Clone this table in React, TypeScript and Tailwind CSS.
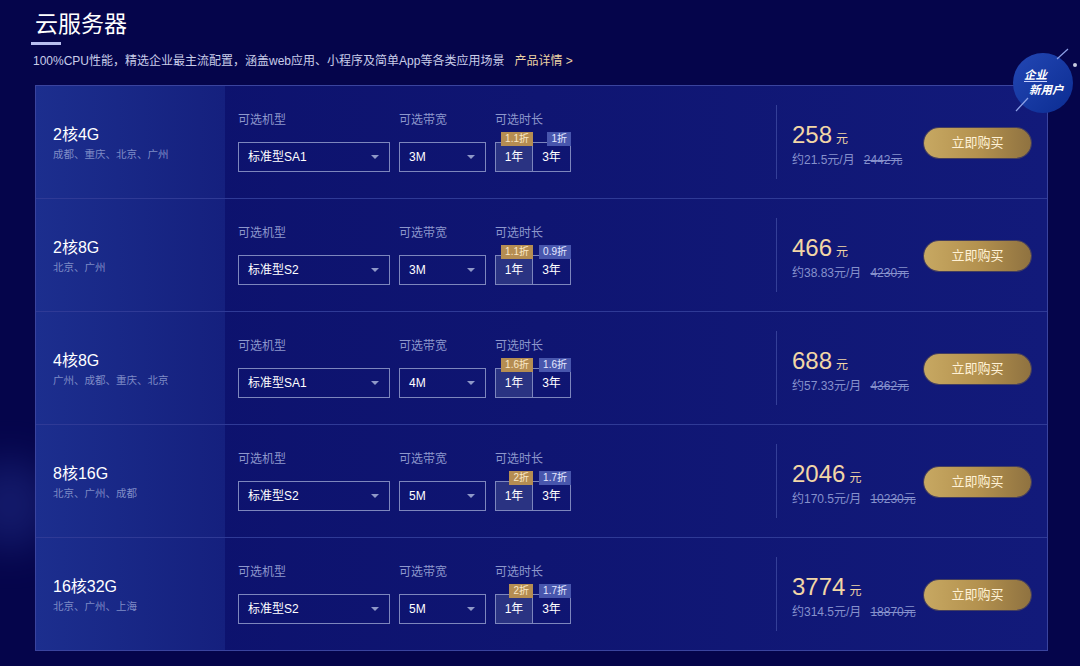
import React from "react";

const plans = [
  { spec: "2核4G", cities: "成都、重庆、北京、广州", model: "标准型SA1", bw: "3M", d1: "1.1折", d3: "1折", price: "258", monthly: "约21.5元/月", orig: "2442元" },
  { spec: "2核8G", cities: "北京、广州", model: "标准型S2", bw: "3M", d1: "1.1折", d3: "0.9折", price: "466", monthly: "约38.83元/月", orig: "4230元" },
  { spec: "4核8G", cities: "广州、成都、重庆、北京", model: "标准型SA1", bw: "4M", d1: "1.6折", d3: "1.6折", price: "688", monthly: "约57.33元/月", orig: "4362元" },
  { spec: "8核16G", cities: "北京、广州、成都", model: "标准型S2", bw: "5M", d1: "2折", d3: "1.7折", price: "2046", monthly: "约170.5元/月", orig: "10230元" },
  { spec: "16核32G", cities: "北京、广州、上海", model: "标准型S2", bw: "5M", d1: "2折", d3: "1.7折", price: "3774", monthly: "约314.5元/月", orig: "18870元" },
];

function Caret() {
  return <span className="w-0 h-0 border-l-[4px] border-r-[4px] border-t-[4px] border-l-transparent border-r-transparent border-t-[#8f98c8]" />;
}

function Select({ value, width }: { value: string; width: string }) {
  return (
    <div className={`${width} h-[30px] border border-[#7d86bd] flex items-center justify-between pl-[9px] pr-[10px] text-[12px] text-white`}>
      <span>{value}</span>
      <Caret />
    </div>
  );
}

function Field({ label, children }: { label: string; children: React.ReactNode }) {
  return (
    <div className="flex flex-col">
      <div className="text-[12px] leading-[17px] text-[#8d97cc] mb-[13px]">{label}</div>
      {children}
    </div>
  );
}

function Row({ p, first }: { p: (typeof plans)[number]; first: boolean }) {
  return (
    <div className={`flex items-center ${first ? "h-[112px]" : "h-[113px] border-t border-[#2f3a96]"}`}>
      <div className="self-stretch w-[189px] flex flex-col justify-center pl-[17px] bg-gradient-to-r from-[#1c2e8e] to-[#15207e]">
        <div className="text-[16px] leading-[22px] text-white">{p.spec}</div>
        <div className="text-[10.5px] leading-[14px] mt-[1px] text-[#7f8bc6]">{p.cities}</div>
      </div>
      <div className="flex gap-[9px] ml-[13px]">
        <Field label="可选机型">
          <Select value={p.model} width="w-[152px]" />
        </Field>
        <Field label="可选带宽">
          <Select value={p.bw} width="w-[87px]" />
        </Field>
        <Field label="可选时长">
          <div className="flex h-[30px] border border-[#7d86bd] text-[12px] text-white">
            <div className="relative w-[37px] flex items-center justify-center bg-[#2a3382] border-r border-[#7d86bd]">
              1年
              <span className="absolute right-[-1px] top-[-11px] h-[14px] px-[4px] flex items-center text-[10px] leading-none text-[#fbe9c8] bg-[#b58d52]">{p.d1}</span>
            </div>
            <div className="relative w-[37px] flex items-center justify-center">
              3年
              <span className="absolute right-[-1px] top-[-11px] h-[14px] px-[4px] flex items-center text-[10px] leading-none text-[#e6e9ff] bg-[#4856ad]">{p.d3}</span>
            </div>
          </div>
        </Field>
      </div>
      <div className="flex-1" />
      <div className="w-px h-[74px] bg-[#343f98]" />
      <div className="w-[147px] pl-[15px] mt-[5px] flex flex-col">
        <div className="flex items-baseline">
          <span className="text-[24px] leading-[28px] text-[#f2d6a6]">{p.price}</span>
          <span className="text-[12px] ml-[4px] text-[#f2d6a6]">元</span>
        </div>
        <div className="flex text-[12px] leading-[16px] mt-[3px] text-[#8691cc]">
          <span>{p.monthly}</span>
          <span className="ml-[9px] line-through">{p.orig}</span>
        </div>
      </div>
      <button className="w-[107px] h-[30px] mr-[16px] mt-[2px] rounded-full bg-gradient-to-r from-[#c7a862] via-[#b4924f] to-[#8f7240] text-[13px] text-[#fff2d6] shadow-[0_0_0_1px_rgba(120,100,70,0.5)]">
        立即购买
      </button>
    </div>
  );
}

export default function App() {
  return (
    <div className="relative w-[1080px] h-[666px] overflow-hidden bg-[#05054b] font-['Liberation_Sans','Noto_Sans_CJK_SC',sans-serif]">
      <div className="absolute left-[-30px] top-[460px] w-[80px] h-[90px] rounded-full bg-[#2a3a9a] opacity-40 blur-[20px]" />
      <div className="relative pl-[35px] pt-[8px]">
        <h1 className="text-[23px] leading-[32px] text-white">云服务器</h1>
        <div className="mt-[2px] -ml-[4px] w-[30px] h-[3px] bg-[#b9bff0]" />
        <p className="mt-[7px] -ml-[2px] text-[12px] leading-[18px] text-[#c9cde9]">
          100%CPU性能，精选企业最主流配置，涵盖web应用、小程序及简单App等各类应用场景
          <span className="ml-[10px] text-[#ecd3a4]">产品详情 &gt;</span>
        </p>
      </div>
      <div className="relative mt-[15px] ml-[35px] w-[1013px] border border-[#3a449e] bg-gradient-to-r from-[#0c116c] via-[#0f1572] to-[#121a7a]">
        {plans.map((p, i) => (
          <Row key={p.spec} p={p} first={i === 0} />
        ))}
      </div>
      <div className="absolute left-[1013px] top-[53px] w-[60px] h-[60px] rounded-full bg-gradient-to-br from-[#2347b4] to-[#0b2c92] flex flex-col justify-center text-[11.5px] leading-[15px] text-white italic font-bold">
        <span className="ml-[11px] underline underline-offset-2 decoration-[#c9d2ff]">企业</span>
        <span className="ml-[16px]">新用户</span>
      </div>
      <svg className="absolute left-[1010px] top-[45px]" width="70" height="72" viewBox="0 0 70 72">
        <line x1="6" y1="66" x2="18" y2="53" stroke="#8ea2e8" strokeWidth="1.2" />
        <line x1="47" y1="14" x2="58" y2="4" stroke="#8ea2e8" strokeWidth="1.2" />
        <circle cx="65" cy="20" r="2" fill="#c8ccdf" />
      </svg>
    </div>
  );
}
